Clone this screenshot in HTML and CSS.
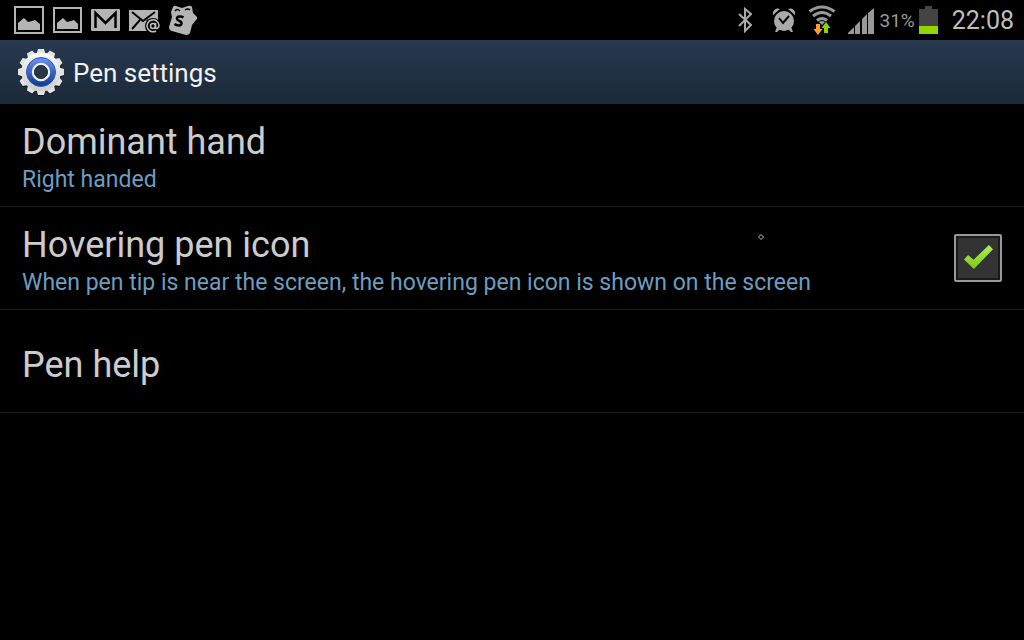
FILE: index.html
```html
<!DOCTYPE html>
<html lang="en">
<head>
<meta charset="utf-8">
<title>Pen settings</title>
<link rel="stylesheet" href="styles.css">
</head>
<body>
<div class="status">
  <div class="notifications">
    <svg width="30" height="28" viewBox="0 0 30 28"><rect x="1" y="1" width="28" height="26" fill="none" stroke="#b4b4b4" stroke-width="2"/><path d="M4 24v-7l6-5 4 4 4-1 3-1 5 4v6z" fill="#b4b4b4"/></svg>
    <svg width="29" height="26" viewBox="0 0 29 26"><rect x="1" y="1" width="27" height="24" fill="none" stroke="#b4b4b4" stroke-width="2"/><path d="M4 22v-6l6-5 4 4 4-1 3-1 4 4v5z" fill="#b4b4b4"/></svg>
    <svg width="29" height="22" viewBox="0 0 29 22"><rect width="29" height="22" rx="1" fill="#b4b4b4"/><path d="M4.500 19V4l10 10 10-10v15" fill="none" stroke="#000" stroke-width="2.500"/></svg>
    <svg class="mail" width="32" height="24" viewBox="0 0 32 24"><rect width="29" height="21" fill="#b4b4b4"/><path d="M3 2l11 9L26 2M3 19l8-9M18 10l4 4" fill="none" stroke="#000" stroke-width="2"/><circle cx="24" cy="16" r="8" fill="#000"/><circle cx="24" cy="16" r="2.500" fill="none" stroke="#c4c4c4" stroke-width="1.500"/><path d="M26.500 13v4c0 3 4 1 3.500-2a6 6 0 1 0-3 6" fill="none" stroke="#c4c4c4" stroke-width="1.500"/></svg>
    <svg class="note" width="30" height="32" viewBox="0 0 30 32"><path d="M5 3q1-2 3-1l6 2 6-2q3-1 4 1l1 6 4 4q1 2-1 3l-4 5-2 8q-1 2-4 2L4 27q-3-1-3-4l3-10-1-5z" fill="#b4b4b4"/><path d="M7 7q2-3 5 0M17 6q3-2 5 0" fill="none" stroke="#000" stroke-width="1.500"/><path d="M15.500 13.500c-3-2-7-1-6.500 1.500.5 2 5 2 4.500 4.500-.5 3-5 2-7 .5" fill="none" stroke="#000" stroke-width="2.500"/></svg>
  </div>
  <div class="indicators">
    <svg width="14" height="26" viewBox="0 0 14 26"><path d="M1 7l12 11-6 6V2l6 5L1 19" fill="none" stroke="#aaa" stroke-width="2"/></svg>
    <svg class="alarm" width="24" height="26" viewBox="0 0 24 26"><g fill="#aaa"><circle cx="12" cy="14" r="10"/><path d="M1 8a5 5 0 0 1 7-6zM23 8a5 5 0 0 0-7-6zM5 20l3 2-3 3H3zM19 20l-3 2 3 3h2z"/></g><path d="M7 11l4 5 6-7" fill="none" stroke="#000" stroke-width="2"/></svg>
    <svg class="wifi" width="28" height="30" viewBox="0 0 28 30"><g fill="none" stroke="#999" stroke-width="3"><path d="M1.500 6.500q12.500-9 25 0M5 11q9-7 18 0M9 15.500q5-4 10 0"/></g><path d="M11 17q3-2 6 0l-3 3z" fill="#999"/><path d="M8 19h4v5h2.500L10 30l-4.500-6H8z" fill="#ff9b30"/><path d="M16 28v-5h-2.500L18 17l4.500 6H20v5z" fill="#8fd400"/></svg>
    <svg class="signal" width="26" height="26" viewBox="0 0 26 26"><path d="M0 26v-1l6-6v7zM7 26v-8l5-5v13zM14 26V11l5-5v20zM20 26V5l6-5v26z" fill="#999"/></svg>
    <span class="percent">31%</span>
    <svg class="battery" width="19" height="28" viewBox="0 0 19 28"><path d="M0 3h6V0h7v3h6v17H0z" fill="#444"/><path d="M0 20h19v8H0z" fill="#91d400"/></svg>
    <time class="clock">22:08</time>
  </div>
</div>
<header class="bar">
  <svg width="46" height="48" viewBox="-23 -24 46 48">
    <defs>
      <linearGradient id="metal" gradientUnits="userSpaceOnUse" x1="0" y1="-23" x2="0" y2="23"><stop offset="0" stop-color="#fff"/><stop offset="1" stop-color="#c8c8c8"/></linearGradient>
      <linearGradient id="blue" x1="0" y1="0" x2="0" y2="1"><stop offset="0" stop-color="#6d93f0"/><stop offset="1" stop-color="#083a90"/></linearGradient>
      <g id="cog"><circle r="19.500"/><path id="teeth" d="M-4.500-18l1.500-5h6l1.500 5v36L3 23h-6l-1.500-5z"/><use href="#teeth" transform="rotate(30)"/><use href="#teeth" transform="rotate(60)"/><use href="#teeth" transform="rotate(90)"/><use href="#teeth" transform="rotate(120)"/><use href="#teeth" transform="rotate(150)"/></g>
    </defs>
    <use href="#cog" y="1" fill="#10161d"/>
    <use href="#cog" fill="#e2e2e2"/>
    <circle r="19.500" fill="url(#metal)"/>
    <circle r="14.500" fill="url(#blue)" stroke="#3157a8"/>
    <circle r="8" fill="#24384c" stroke="#eee" stroke-width="2.500"/>
    <circle r="6.500" fill="#24384c" stroke="#333" stroke-width="1"/>
  </svg>
  <h1>Pen settings</h1>
</header>
<main>
  <button class="row" type="button"><span class="text"><span class="title">Dominant hand</span><span class="summary">Right handed</span></span></button>
  <label class="row"><span class="text"><span class="title">Hovering pen icon</span><span class="summary">When pen tip is near the screen, the hovering pen icon is shown on the screen</span></span><input class="check" type="checkbox" checked></label>
  <button class="row" type="button"><span class="text"><span class="title">Pen help</span></span></button>
</main>
<svg class="pointer" width="6" height="6" viewBox="0 0 6 6"><path d="M3 .5L5.500 3 3 5.500.5 3z" fill="none" stroke="#bbb"/></svg>
</body>
</html>
```
FILE: styles.css
```css
* { box-sizing: border-box; }
body { margin: 0; min-height: 100vh; background: #000; color: #ccc; font-family: Roboto, sans-serif; }
svg { display: block; flex: none; }
.status { display: flex; justify-content: space-between; align-items: center; height: 40px; padding: 0 10px 0 14px; }
.notifications, .indicators { display: flex; align-items: center; }
.notifications { gap: 9px; }
.mail { margin-top: 4px; }
.note { margin-left: -2px; }
.alarm { margin-left: 20px; }
.wifi { margin-left: 12px; }
.signal { margin: 2px 0 0 12px; }
.percent { margin-left: 5px; font-size: 19px; color: #999; }
.battery { margin-left: 4px; }
.clock { margin-left: 14px; padding-top: 1px; font-size: 25px; color: #bebebe; }
.bar { display: flex; align-items: center; gap: 9px; height: 64px; padding: 0 18px; background: linear-gradient(#28394f, #1b2938); }
h1 { margin: 0; padding-top: 1px; font-size: 26px; font-weight: 400; color: #f2f2f2; }
.row { display: flex; align-items: center; justify-content: space-between; width: 100%; min-height: 103px; padding: 0 22px; border: 0; border-bottom: 1px solid #1c1c1c; background: none; color: inherit; font: inherit; text-align: left; }
.text, .title, .summary { display: block; }
.text { padding-top: 8px; }
.title { font-size: 36px; line-height: 42px; }
.summary { font-size: 23px; line-height: 34px; color: #6c9dc2; }
.check { position: relative; appearance: none; flex: none; width: 48px; height: 48px; margin: 0; border: 2px solid #999; border-radius: 2px; background: #333; box-shadow: inset 0 0 0 2px #1a1a1a; }
.check:checked::before { content: ""; position: absolute; inset: 9px 7px 11px 8px; background: linear-gradient(#a9ef50, #7ccb12); clip-path: polygon(0 60%, 14% 42%, 33% 61%, 86% 0, 100% 18%, 34% 100%); }
.pointer { position: absolute; left: 758px; top: 234px; }
```
